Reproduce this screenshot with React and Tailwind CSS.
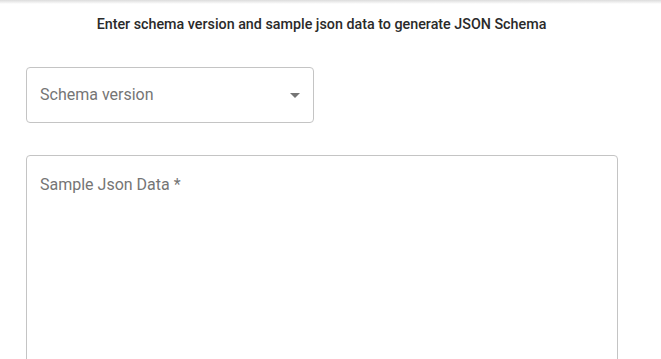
import React from "react"

export default function App() {
  return (
    <div className="w-[661px] h-[359px] overflow-hidden bg-white font-['Roboto',sans-serif] relative">
      <div className="h-[4px] w-full bg-gradient-to-b from-[#dcdcdc] to-white" />
      <div className="w-[643px] text-center text-[14.3px] leading-[20px] text-[#2a2a2a] font-medium pt-[10px]">
        Enter schema version and sample json data to generate JSON Schema
      </div>
      <div className="pl-[26px] pt-[33px]">
        <div className="w-[288px] h-[56px] border border-[#c4c4c4] rounded-[4px] flex items-center justify-between pl-[13px] pr-[13px]">
          <span className="text-[16px] text-[#757575]">Schema version</span>
          <svg width="10" height="5" viewBox="0 0 10 5">
            <path d="M0 0L5 5L10 0Z" fill="#757575" />
          </svg>
        </div>
        <div className="mt-[32px] w-[592px] h-[260px] border border-[#c4c4c4] rounded-[4px] pl-[13px] pt-[17px]">
          <span className="text-[16px] text-[#757575]">Sample Json Data *</span>
        </div>
      </div>
    </div>
  )
}
